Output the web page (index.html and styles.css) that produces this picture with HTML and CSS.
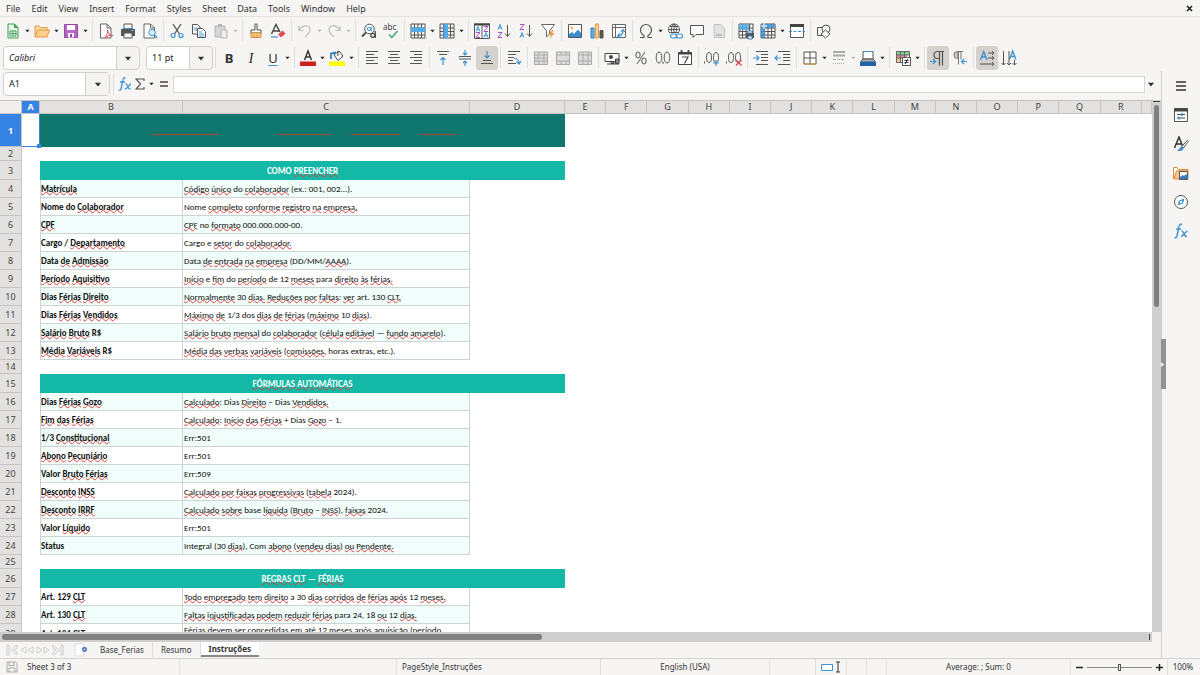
FILE: index.html
```html
<!DOCTYPE html>
<html lang="pt-BR">
<head>
<meta charset="utf-8">
<meta name="viewport" content="width=device-width, initial-scale=1">
<title>Instruções</title>
<link rel="stylesheet" href="styles.css">
</head>
<body>
<svg class="defs" aria-hidden="true">
  <defs>
    <path id="wave" d="M0 2l2-1 2 1 2-1 2 1 2-1 2 1 2-1 2 1 2-1 2 1 2-1 2 1 2-1 2 1 2-1 2 1 2-1 2 1 2-1 2 1 2-1 2 1 2-1 2 1 2-1 2 1 2-1 2 1 2-1 2 1 2-1 2 1 2-1 2 1 2-1 2 1" fill="none" stroke="#b5413a"/>
    <path id="ia" d="M0 5.500 2 .5 4 5.500M1 3.800h2" fill="none" stroke="#3e93d2"/>
    <path id="iz" d="M0 .5h4L0 5.500h4" fill="none" stroke="#a44fc0"/>
    <symbol id="tri" viewBox="0 0 6 4"><path d="M.5.5h5L3 3.5z" fill="currentColor"/></symbol>
    <symbol id="sheetgrid" viewBox="0 0 16 16"><path d="M1 1h14v14H1zM1 5h14M1 8.500h14M1 12h14M4.500 1v14M8 1v14M11.500 1v14" fill="none" stroke="#555"/></symbol>
  </defs>
</svg>

<nav class="menubar">
  <button>File</button><button>Edit</button><button>View</button><button>Insert</button><button>Format</button><button>Styles</button><button>Sheet</button><button>Data</button><button>Tools</button><button>Window</button><button>Help</button>
  <button class="close" aria-label="Close"><svg width="7" height="7" viewBox="0 0 7 7"><path d="M1 1l5 5M6 1L1 6" stroke="#222" stroke-width="1.6"/></svg></button>
</nav>

<div class="toolbar" role="toolbar" aria-label="Standard">
  <button class="tool" aria-label="New"><svg viewBox="0 0 16 16"><path d="M3 1h6.500L13 4.500V15H3z" fill="#e6f5e9" stroke="#3f9e54"/><path d="M9.500 1v3.500H13" fill="#3f9e54" stroke="#3f9e54"/><path d="M5 8h6v5H5zM5 10.500h6M8 8v5" fill="#fff" stroke="#3f9e54"/></svg></button>
  <button class="dd" aria-label="New options"><svg><use href="#tri"/></svg></button>
  <button class="tool" aria-label="Open"><svg viewBox="0 0 16 16"><path d="M1 14V3h4l1.500 1.500H13V7" fill="#fbd9a4" stroke="#dd9a45"/><path d="M1 14 3.500 7H15.500L13 14z" fill="#fcd08c" stroke="#e39a3c"/></svg></button>
  <button class="dd" aria-label="Open options"><svg><use href="#tri"/></svg></button>
  <button class="tool" aria-label="Save"><svg viewBox="0 0 16 16"><path d="M1.500 1.500h13v13h-13z" fill="#b967c7" stroke="#9b45ab"/><path d="M4 2h8v5H4zM5 10h6v4.500H5z" fill="#fff"/><path d="M7 11h2v3H7z" fill="#9b45ab"/></svg></button>
  <button class="dd" aria-label="Save options"><svg><use href="#tri"/></svg></button>
  <span class="sep"></span>
  <button class="tool" aria-label="Export as PDF"><svg viewBox="0 0 16 16"><path d="M2.500 1h6.500l4 4v10H2.500z" fill="#fff" stroke="#666"/><path d="M9 1v4h4" fill="none" stroke="#666"/><path d="M7 15c2-3 3-6 2.500-8 0 3 2 5 5.500 5.500-3-.5-6 .5-8 2.500" fill="none" stroke="#db4a54"/></svg></button>
  <button class="tool" aria-label="Print"><svg viewBox="0 0 16 16"><path d="M4 1h8v5H4z" fill="#fff" stroke="#555"/><path d="M1 6h14v7H1z" fill="#555"/><path d="M4 10h8v5H4z" fill="#f8f8f8" stroke="#555"/><path d="M11 7.500h3" stroke="#55a8e3"/><path d="M3 5.500h10" stroke="#3f91cf"/></svg></button>
  <button class="tool" aria-label="Print preview"><svg viewBox="0 0 16 16"><path d="M2 1h6.500l4 4v10H2z" fill="#fff" stroke="#666"/><path d="M8.500 1v4h4" fill="none" stroke="#666"/><circle cx="10" cy="9.500" r="3.300" fill="#d9efff" stroke="#3e93d2"/><path d="M12.500 12l2.500 3" stroke="#3e93d2" stroke-width="1.500"/></svg></button>
  <span class="sep"></span>
  <button class="tool" aria-label="Cut"><svg viewBox="0 0 16 16"><path d="M4 1l6.500 10M12 1L5.500 11" stroke="#555" stroke-width="1.300"/><circle cx="4" cy="12.500" r="2" fill="none" stroke="#3e93d2" stroke-width="1.200"/><circle cx="12" cy="12.500" r="2" fill="none" stroke="#3e93d2" stroke-width="1.200"/></svg></button>
  <button class="tool" aria-label="Copy"><svg viewBox="0 0 16 16"><path d="M1.500 1.500h5L9 4v7H1.500z" fill="#fff" stroke="#555"/><path d="M6.500 5.500h5l3 3v6h-8z" fill="#fff" stroke="#555"/><path d="M3 5h3M3 7h3M8 9h3M8 11h5M8 13h5" stroke="#4b9cd8"/></svg></button>
  <button class="tool" aria-label="Paste"><svg viewBox="0 0 16 16"><path d="M2 3h10v11H2z" fill="#d6d6d6" stroke="#b5b5b5"/><path d="M5 1h4v3H5z" fill="#b5b5b5"/><path d="M8 7h6v8H8z" fill="#eee" stroke="#b5b5b5"/></svg></button>
  <button class="dd off" aria-label="Paste options"><svg><use href="#tri"/></svg></button>
  <span class="sep"></span>
  <button class="tool" aria-label="Clone formatting"><svg viewBox="0 0 16 16"><path d="M7 1h2v6h4v3H3V7h4z" fill="#fff" stroke="#555"/><path d="M3 10h10v4.500H3z" fill="#f8c98b" stroke="#dd8e36"/><path d="M6 12v3M9 12v3" stroke="#dd8e36"/></svg></button>
  <button class="tool" aria-label="Clear formatting"><svg viewBox="0 0 16 16"><path d="M1.500 11 6 1.500 10 9M3.300 8H9" fill="none" stroke="#444" stroke-width="1.400"/><path d="M1 14h7" stroke="#3e93d2" stroke-width="1.200"/><path d="M8 11.500l4.500-4 3 3-4.500 4z" fill="#e34b54"/></svg></button>
  <span class="sep"></span>
  <button class="tool" aria-label="Undo"><svg viewBox="0 0 16 16"><path d="M2 3v4.500h4.500M2 7.500C5 2 12 1 13 6c.6 3-2 5-5 8" fill="none" stroke="#bdbdbd" stroke-width="1.200"/></svg></button>
  <button class="dd off" aria-label="Undo options"><svg><use href="#tri"/></svg></button>
  <button class="tool" aria-label="Redo"><svg viewBox="0 0 16 16"><path d="M14 3v4.500H9.500M14 7.500C11 2 4 1 3 6c-.6 3 2 5 5 8" fill="none" stroke="#bdbdbd" stroke-width="1.200"/></svg></button>
  <button class="dd off" aria-label="Redo options"><svg><use href="#tri"/></svg></button>
  <span class="sep"></span>
  <button class="tool" aria-label="Find and replace"><svg viewBox="0 0 16 16"><circle cx="8.500" cy="6" r="4.800" fill="#fff" stroke="#555"/><path d="M5 9.500 1 13.500" stroke="#444" stroke-width="1.800"/><circle cx="8" cy="6" r="1.700" fill="none" stroke="#3e93d2"/><path d="M10.200 3.500v5" stroke="#3e93d2"/><circle cx="11.800" cy="12.300" r="2" fill="#f6f5f4" stroke="#444" stroke-width="1.200"/><path d="M14.300 8v7" stroke="#444" stroke-width="1.200"/></svg></button>
  <button class="tool" aria-label="Spelling"><svg viewBox="0 0 16 16"><text x="0" y="7" font-size="8" fill="#444">abc</text><path d="M6 11.500l2.800 3L14.500 8" fill="none" stroke="#3fae6a" stroke-width="1.500"/></svg></button>
  <span class="sep"></span>
  <button class="tool" aria-label="Row"><svg viewBox="0 0 16 16"><use href="#sheetgrid"/><path d="M1 4.500h14V9H1z" fill="#54abe8"/></svg></button>
  <button class="dd" aria-label="Row options"><svg><use href="#tri"/></svg></button>
  <button class="tool" aria-label="Column"><svg viewBox="0 0 16 16"><use href="#sheetgrid"/><path d="M4.500 1H9v14H4.500z" fill="#54abe8"/></svg></button>
  <button class="dd" aria-label="Column options"><svg><use href="#tri"/></svg></button>
  <span class="sep"></span>
  <button class="tool" aria-label="Sort"><svg viewBox="0 0 16 16"><path d="M.5 1h15v14.500H.5zM8 1v14" fill="#fff" stroke="#555"/><path d="M0 1.500h16" stroke="#444" stroke-width="2"/><use href="#ia" x="2" y="3"/><use href="#iz" x="2" y="9"/><use href="#iz" x="10" y="3"/><use href="#ia" x="10" y="9"/></svg></button>
  <button class="tool" aria-label="Sort ascending"><svg viewBox="0 0 16 16"><use href="#ia" x="2" y="1"/><use href="#iz" x="2" y="9"/><path d="M11.500 2v11M9 10.500l2.500 3 2.500-3" fill="none" stroke="#555"/></svg></button>
  <button class="tool" aria-label="Sort descending"><svg viewBox="0 0 16 16"><use href="#iz" x="2" y="1"/><use href="#ia" x="2" y="9"/><path d="M11.500 2v11M9 10.500l2.500 3 2.500-3" fill="none" stroke="#555"/></svg></button>
  <button class="tool" aria-label="AutoFilter"><svg viewBox="0 0 16 16"><path d="M1.500 1.500h13L9.500 8v3L6.500 14V8z" fill="#fff" stroke="#666"/><path d="M12 7 8.500 12H11l-1.500 4 5-6H12l1.500-3z" fill="#f19b3d"/></svg></button>
  <span class="sep"></span>
  <button class="tool" aria-label="Insert image"><svg viewBox="0 0 16 16"><path d="M1.500 1.500h13v13h-13z" fill="#fff" stroke="#555"/><circle cx="5" cy="5" r="1.500" fill="#f5b45d"/><path d="M2 14v-3l3-2 2 2 4-4.500 3 3.500v4z" fill="#3b8dcc"/></svg></button>
  <button class="tool" aria-label="Insert chart"><svg viewBox="0 0 16 16"><path d="M2 5h3v10H2z" fill="#62b1e8" stroke="#2f7fc0"/><path d="M6.500 1h3v14h-3z" fill="#fbd193" stroke="#e39a3c"/><path d="M11 7.500h3V15h-3z" fill="#555" stroke="#555"/></svg></button>
  <button class="tool" aria-label="Pivot table"><svg viewBox="0 0 16 16"><path d="M1.500 1.500h13v13h-13zM1.500 4.500h13M4.500 1.500v13" fill="#fff" stroke="#666"/><path d="M7 13c4 0 5-2 5-6M10 9l2-2.500L14 9M9 10.500 6.500 13 9 15" fill="none" stroke="#3e93d2" stroke-width="1.200"/></svg></button>
  <span class="sep"></span>
  <button class="tool" aria-label="Special character"><svg viewBox="0 0 16 16"><path d="M2 14.500h4v-2C3.500 11 2.500 9.500 2.500 7a5.500 5.500 0 0 1 11 0c0 2.500-1 4-3.500 5.500v2h4" fill="none" stroke="#555" stroke-width="1.200"/></svg></button>
  <button class="dd" aria-label="Special character options"><svg><use href="#tri"/></svg></button>
  <button class="tool" aria-label="Hyperlink"><svg viewBox="0 0 16 16"><circle cx="7" cy="6.500" r="5.500" fill="#fff" stroke="#555"/><path d="M1.500 6.500h11M7 1v11M2.500 3.500h9M2.500 9.500h9" stroke="#555"/><ellipse cx="7" cy="6.500" rx="2.500" ry="5.500" fill="none" stroke="#555"/><path d="M3 10h12v6H3z" fill="#f6f5f4"/><rect x="3.500" y="11" width="6" height="4" rx="2" fill="none" stroke="#3e93d2" stroke-width="1.200"/><rect x="9.500" y="11" width="6" height="4" rx="2" fill="none" stroke="#3e93d2" stroke-width="1.200"/></svg></button>
  <button class="tool" aria-label="Comment"><svg viewBox="0 0 16 16"><path d="M1.500 2.500h13v9H7l-3 3v-3H1.500z" fill="#fff" stroke="#555"/></svg></button>
  <button class="tool" aria-label="Headers and footers"><svg viewBox="0 0 16 16"><path d="M3 1.500h6.500l4 4v9H3z" fill="#e2e2e2" stroke="#c2c2c2"/><path d="M5 11h6v2H5z" fill="#bbb"/></svg></button>
  <span class="sep"></span>
  <button class="tool" aria-label="Print area"><svg viewBox="0 0 16 16"><use href="#sheetgrid"/><path d="M1 1h10v6H1z" fill="#54abe8" opacity=".8"/><path d="M8 10h8v5H8z" fill="#555"/><path d="M9.500 8h5v2h-5zM10 13h4v3h-4z" fill="#fff" stroke="#3e79a8"/></svg></button>
  <button class="tool" aria-label="Freeze rows and columns"><svg viewBox="0 0 16 16"><use href="#sheetgrid"/><path d="M1 1h14v4H5v10H1z" fill="#3e93d2" opacity=".85"/><path d="M4 0v6M1 3h6" stroke="#fff"/></svg></button>
  <button class="dd" aria-label="Freeze options"><svg><use href="#tri"/></svg></button>
  <button class="tool" aria-label="Split window"><svg viewBox="0 0 16 16"><path d="M1.500 1.500h13v13h-13z" fill="#fff" stroke="#555"/><path d="M1 2.500h14" stroke="#444" stroke-width="3"/><path d="M0 8.500h16" stroke="#3e93d2" stroke-dasharray="3 1.500"/></svg></button>
  <span class="sep"></span>
  <button class="tool" aria-label="Draw functions"><svg viewBox="0 0 16 16"><path d="M1.500 4.500h7v8h-7z" fill="none" stroke="#555"/><circle cx="10" cy="6" r="4" fill="#f6f5f4" stroke="#555"/><path d="M9.500 7 14 11l-4.500 4L5 11z" fill="#f6f5f4" stroke="#555"/></svg></button>
</div>

<div class="toolbar" role="toolbar" aria-label="Formatting">
  <span class="combo font"><select aria-label="Font name"><option>Calibri</option></select><svg class="arrow"><use href="#tri"/></svg></span>
  <span class="combo size"><select aria-label="Font size"><option>11 pt</option></select><svg class="arrow"><use href="#tri"/></svg></span>
  <span class="sep"></span>
  <button class="tool letter bold">B</button>
  <button class="tool letter ital">I</button>
  <button class="tool letter under">U</button>
  <button class="dd" aria-label="Underline options"><svg><use href="#tri"/></svg></button>
  <span class="sep"></span>
  <button class="tool" aria-label="Font color"><svg viewBox="0 0 16 16"><path d="M4.500 10 8 1l3.500 9M5.800 7h4.500" fill="none" stroke="#333" stroke-width="1.400"/><path d="M0 11.500h16V16H0z" fill="#c9211e"/></svg></button>
  <button class="dd" aria-label="Font color options"><svg><use href="#tri"/></svg></button>
  <button class="tool" aria-label="Highlight color"><svg viewBox="0 0 16 16"><path d="M5 5l5-4 4 5-5 4.500z" fill="#fff" stroke="#444"/><path d="M2 9V3.500l5-1" fill="none" stroke="#2c83c6" stroke-width="1.800"/><path d="M9 1v5" stroke="#444"/><path d="M0 11.500h16V16H0z" fill="#ff0"/></svg></button>
  <button class="dd" aria-label="Highlight options"><svg><use href="#tri"/></svg></button>
  <span class="sep"></span>
  <button class="tool" aria-label="Align left"><svg viewBox="0 0 16 16"><path d="M2 1.500h12M2 4.500h8M2 7.500h12M2 10.500h8M2 13.500h12" stroke="#555"/></svg></button>
  <button class="tool" aria-label="Center horizontally"><svg viewBox="0 0 16 16"><path d="M2 1.500h12M4 4.500h8M2 7.500h12M4 10.500h8M2 13.500h12" stroke="#555"/></svg></button>
  <button class="tool" aria-label="Align right"><svg viewBox="0 0 16 16"><path d="M2 1.500h12M6 4.500h8M2 7.500h12M6 10.500h8M2 13.500h12" stroke="#555"/></svg></button>
  <span class="sep"></span>
  <button class="tool" aria-label="Align top"><svg viewBox="0 0 16 16"><path d="M2 1.500h12M4 4.500h8" stroke="#555"/><path d="M8 15V8M5.500 10 8 7.500l2.500 2.500" fill="none" stroke="#3e93d2" stroke-width="1.200"/></svg></button>
  <button class="tool" aria-label="Center vertically"><svg viewBox="0 0 16 16"><path d="M2 6.500h12M2 9h12" stroke="#555"/><path d="M8 0v5M6 3l2 2 2-2M8 16v-5M6 13l2-2 2 2" fill="none" stroke="#3e93d2" stroke-width="1.200"/></svg></button>
  <button class="tool on" aria-label="Align bottom"><svg viewBox="0 0 16 16"><path d="M4 10.500h8M2 13.500h12" stroke="#555"/><path d="M8 1v7M5.500 5.500 8 8l2.500-2.500" fill="none" stroke="#3e93d2" stroke-width="1.200"/></svg></button>
  <span class="sep"></span>
  <button class="tool" aria-label="Wrap text"><svg viewBox="0 0 16 16"><path d="M2 1.500h12M2 4.500h8M2 7.500h6M2 10.500h5M2 13.500h8" stroke="#555"/><path d="M8 8.500c4 0 5 1.500 5 5M10.500 11.500l2.500 2.500 2-3" fill="none" stroke="#3e93d2" stroke-width="1.200"/></svg></button>
  <span class="sep"></span>
  <button class="tool" aria-label="Merge and center"><svg viewBox="0 0 16 16"><path d="M1.500 2h13v12.500h-13zM1.500 5h13M1.500 8h13M1.500 11h13M6 2v3M11 2v3M5 5v6M11 5v6M6 11v3.500M11 11v3.500" fill="#ddd" stroke="#aaa"/></svg></button>
  <button class="tool" aria-label="Merge cells"><svg viewBox="0 0 16 16"><path d="M1.500 2h13v12.500h-13zM1.500 5h13M1.500 11h13M6 2v3M11 2v3M6 11v3.500M11 11v3.500" fill="#ddd" stroke="#aaa"/></svg></button>
  <button class="tool" aria-label="Unmerge cells"><svg viewBox="0 0 16 16"><path d="M1.500 2h13v12.500h-13zM1.500 5h13M1.500 11h13M6 2v12.500M11 2v12.500" fill="#ddd" stroke="#aaa"/></svg></button>
  <span class="sep"></span>
  <button class="tool" aria-label="Format as currency"><svg viewBox="0 0 16 16"><path d="M1 3.500h14v8H1z" fill="#fff" stroke="#444"/><circle cx="7" cy="7" r="2" fill="#444"/><path d="M7 13.500v-2h3v2zM11.500 13.500V9H15v4.500zM3 14h12" fill="#888" stroke="#444"/></svg></button>
  <button class="dd" aria-label="Currency options"><svg><use href="#tri"/></svg></button>
  <button class="tool" aria-label="Format as percent"><svg viewBox="0 0 16 16"><ellipse cx="5" cy="5" rx="2.200" ry="3" fill="none" stroke="#555"/><ellipse cx="11" cy="11" rx="2.200" ry="3" fill="none" stroke="#555"/><path d="M12 2 4 14" stroke="#555"/></svg></button>
  <button class="tool" aria-label="Format as number"><svg viewBox="0 0 16 16"><ellipse cx="4" cy="7.500" rx="2.800" ry="5.500" fill="none" stroke="#555"/><ellipse cx="12" cy="7.500" rx="2.800" ry="5.500" fill="none" stroke="#555"/><path d="M8 11.500v2.500" stroke="#555"/></svg></button>
  <button class="tool" aria-label="Format as date"><svg viewBox="0 0 16 16"><path d="M1.500 2.500h13v12h-13z" fill="#fff" stroke="#444"/><path d="M1 3.500h14M4.500 0v3M11.500 0v3" stroke="#444" stroke-width="1.800"/><path d="M5 7h6l-3.500 6.500" fill="none" stroke="#444" stroke-width="1.200"/></svg></button>
  <span class="sep"></span>
  <button class="tool" aria-label="Add decimal place"><svg viewBox="0 0 16 16"><ellipse cx="5" cy="7.500" rx="2.500" ry="5" fill="none" stroke="#555"/><ellipse cx="12" cy="7.500" rx="2.500" ry="5" fill="none" stroke="#555"/><path d="M.5 11.500v2" stroke="#555"/><path d="M12 10v6M9 13h6" stroke="#3e93d2" stroke-width="1.200"/></svg></button>
  <button class="tool" aria-label="Delete decimal place"><svg viewBox="0 0 16 16"><ellipse cx="5" cy="7.500" rx="2.500" ry="5" fill="none" stroke="#555"/><ellipse cx="12" cy="7.500" rx="2.500" ry="5" fill="none" stroke="#555"/><path d="M.5 11.500v2" stroke="#555"/><path d="M10 10l5.500 5.500M15.500 10 10 15.500" stroke="#df4750" stroke-width="1.200"/></svg></button>
  <span class="sep"></span>
  <button class="tool" aria-label="Increase indent"><svg viewBox="0 0 16 16"><path d="M3 1.500h12M8 4.500h7M8 7.500h7M8 10.500h7M3 14.500h12" stroke="#555"/><path d="M0 8h6M3.500 5.500 6 8l-2.500 2.500" fill="none" stroke="#3e93d2" stroke-width="1.200"/></svg></button>
  <button class="tool" aria-label="Decrease indent"><svg viewBox="0 0 16 16"><path d="M3 1.500h12M8 4.500h7M8 7.500h7M8 10.500h7M3 14.500h12" stroke="#555"/><path d="M0 8h6M2.500 5.500 0 8l2.500 2.500" fill="none" stroke="#3e93d2" stroke-width="1.200"/></svg></button>
  <span class="sep"></span>
  <button class="tool" aria-label="Borders"><svg viewBox="0 0 16 16"><path d="M2 2h12v12H2zM2 8h12M8 2v12" fill="#fff" stroke="#555"/><path d="M2 14h12" stroke="#e39a3c"/></svg></button>
  <button class="dd" aria-label="Border options"><svg><use href="#tri"/></svg></button>
  <button class="tool" aria-label="Border style"><svg viewBox="0 0 16 16"><path d="M2 2h12M2 5.500h12" stroke="#aaa" stroke-width="2"/><path d="M2 9.500h12" stroke="#aaa" stroke-dasharray="3 1"/><path d="M2 13.500h12" stroke="#aaa" stroke-dasharray="1 1"/></svg></button>
  <button class="dd off" aria-label="Border style options"><svg><use href="#tri"/></svg></button>
  <button class="tool" aria-label="Border color"><svg viewBox="0 0 16 16"><path d="M3 1.500h10V9H3zM1 11l2-2h10l2 2z" fill="#fff" stroke="#555"/><path d="M3.500 1.500h9" stroke="#3e93d2"/><path d="M0 11.500h16V16H0z" fill="#2362a5"/></svg></button>
  <button class="dd" aria-label="Border color options"><svg><use href="#tri"/></svg></button>
  <span class="sep"></span>
  <button class="tool" aria-label="Conditional formatting"><svg viewBox="0 0 16 16"><path d="M1.500 1.500h13v11h-13z" fill="#fff" stroke="#666"/><path d="M2 2h12v3H2z" fill="#80d09b"/><path d="M2 5h10v3H2z" fill="#ef8a8a"/><path d="M2 8h4v4H2z" fill="#f9c985"/><path d="M1.500 5h13M1.500 8h13M5.500 1.500v11M9.500 1.500v11" stroke="#666"/><path d="M7.500 7.500h8v8h-8z" fill="#fff" stroke="#555"/><path d="M9.500 10.500h4M9.500 12.500h4M13 9l-3 5" stroke="#333"/></svg></button>
  <button class="dd" aria-label="Conditional options"><svg><use href="#tri"/></svg></button>
  <span class="sep"></span>
  <button class="tool on" aria-label="Left-to-right"><svg viewBox="0 0 16 16"><path d="M14 1.500H7.500a3.500 3.500 0 0 0 0 7H9M9.500 1.500v14M12.500 1.500v14" fill="none" stroke="#555" stroke-width="1.200"/><path d="M0 11.500h5.500M3 9l2.500 2.500L3 14" fill="none" stroke="#3e93d2" stroke-width="1.200"/></svg></button>
  <button class="tool" aria-label="Right-to-left"><svg viewBox="0 0 16 16"><path d="M11 1.500H5.500a3.500 3.500 0 0 0 0 7H6V1.500M6.500 1.500v13M9 1.500v8" fill="#ccc" stroke="#777"/><path d="M9.500 11.500H15M12 9l-2.500 2.500L12 14" fill="none" stroke="#3e93d2" stroke-width="1.200"/></svg></button>
  <span class="sep"></span>
  <button class="tool on" aria-label="Text direction from left to right"><svg viewBox="0 0 16 16"><path d="M1.500 10 4.700 1.500 8 10M2.800 7h4" fill="none" stroke="#3e93d2" stroke-width="1.400"/><path d="M9 3h6M13 1l2 2-2 2M9 8h6M13 6l2 2-2 2M1 14h14M13 12l2 2-2 2" fill="none" stroke="#555"/></svg></button>
  <button class="tool" aria-label="Text direction from top to bottom"><svg viewBox="0 0 16 16"><path d="M8.500 9.500 11.700 1l3.200 8.500M9.800 6.500h4" fill="none" stroke="#3e93d2" stroke-width="1.400"/><path d="M2.500 1v14M.5 13l2 2 2-2M8 1v14M6 13l2 2 2-2M13.500 10v5M11.500 13l2 2 2-2" fill="none" stroke="#555"/></svg></button>
</div>

<div class="workspace">
  <main class="content">
    <div class="formulabar">
      <span class="namebox"><input type="text" value="A1" aria-label="Name box"><button aria-label="Cell names"><svg><use href="#tri"/></svg></button></span>
      <span class="sep"></span>
      <button class="fx" aria-label="Function wizard"><svg width="14" height="16" viewBox="0 0 14 16"><path d="M7.500 2C5.500 1 5 3 4.500 6L3.200 12C2.800 14 2 14.500.8 14M2 6h5M7.500 8c2-1 2 6 5 5M13 8c-2 0-3.500 5-6 5.200" fill="none" stroke="#3e93d2" stroke-width="1.300"/></svg></button>
      <button class="sigma" aria-label="Select function"><svg width="10" height="12" viewBox="0 0 10 12"><path d="M9 3V1H1l4.500 5L1 11h8V9" fill="none" stroke="#555" stroke-width="1.200"/></svg></button>
      <button class="dd" aria-label="Function options"><svg><use href="#tri"/></svg></button>
      <button class="equals" aria-label="Formula"><svg width="8" height="6" viewBox="0 0 8 6"><path d="M0 1h8M0 5h8" stroke="#444" stroke-width="1.500"/></svg></button>
      <input class="formula" type="text" aria-label="Input line">
      <button class="expand" aria-label="Expand formula bar"><svg><use href="#tri"/></svg></button>
    </div>

    <div class="sheetrow">
      <div class="sheet">
        <table class="grid">
          <colgroup><col class="c-head"><col class="c-a"><col class="c-b"><col class="c-c"><col class="c-d"><col span="14"><col class="c-s"></colgroup>
          <thead>
            <tr><th></th><th class="sel">A</th><th>B</th><th>C</th><th>D</th><th>E</th><th>F</th><th>G</th><th>H</th><th>I</th><th>J</th><th>K</th><th>L</th><th>M</th><th>N</th><th>O</th><th>P</th><th>Q</th><th>R</th><th></th></tr>
          </thead>
          <tbody>
            <tr class="r-title"><th class="sel">1</th><td class="cursor"></td><td class="title" colspan="3"><div class="waves"><svg width="67" height="3"><use href="#wave"/></svg><svg width="54" height="3"><use href="#wave"/></svg><svg width="49" height="3"><use href="#wave"/></svg><svg width="36" height="3"><use href="#wave"/></svg></div></td></tr>
            <tr class="r-gap"><th>2</th></tr>
            <tr class="r-section"><th>3</th><td></td><td class="section" colspan="3">COMO <u>PREENCHER</u></td></tr>
            <tr class="tint"><th>4</th><td></td><td class="k"><u>Matrícula</u></td><td class="v"><u>Código</u> <u>único</u> do <u>colaborador</u> (ex.: 001, 002...).</td></tr>
            <tr><th>5</th><td></td><td class="k">Nome do <u>Colaborador</u></td><td class="v">Nome <u>completo</u> <u>conforme</u> <u>registro</u> <u>na</u> <u>empresa.</u></td></tr>
            <tr class="tint"><th>6</th><td></td><td class="k"><u>CPF</u></td><td class="v"><u>CPF</u> no <u>formato</u> 000.000.000-00.</td></tr>
            <tr><th>7</th><td></td><td class="k">Cargo / <u>Departamento</u></td><td class="v">Cargo e <u>setor</u> do <u>colaborador.</u></td></tr>
            <tr class="tint"><th>8</th><td></td><td class="k">Data <u>de</u> <u>Admissão</u></td><td class="v">Data <u>de</u> <u>entrada</u> <u>na</u> <u>empresa</u> (DD/MM/<u>AAAA</u>).</td></tr>
            <tr><th>9</th><td></td><td class="k"><u>Período</u> <u>Aquisitivo</u></td><td class="v"><u>Início</u> e <u>fim</u> do <u>período</u> de 12 <u>meses</u> para <u>direito</u> <u>às</u> <u>férias.</u></td></tr>
            <tr class="tint"><th>10</th><td></td><td class="k">Dias <u>Férias</u> <u>Direito</u></td><td class="v"><u>Normalmente</u> 30 <u>dias.</u> <u>Reduções</u> <u>por</u> <u>faltas</u>: <u>ver</u> art. 130 <u>CLT.</u></td></tr>
            <tr><th>11</th><td></td><td class="k">Dias <u>Férias</u> <u>Vendidos</u></td><td class="v"><u>Máximo</u> <u>de</u> 1/3 dos <u>dias</u> <u>de</u> <u>férias</u> (<u>máximo</u> 10 <u>dias</u>).</td></tr>
            <tr class="tint"><th>12</th><td></td><td class="k"><u>Salário</u> <u>Bruto</u> R$</td><td class="v"><u>Salário</u> <u>bruto</u> <u>mensal</u> do <u>colaborador</u> (<u>célula</u> <u>editável</u> — <u>fundo</u> <u>amarelo</u>).</td></tr>
            <tr><th>13</th><td></td><td class="k"><u>Média</u> <u>Variáveis</u> R$</td><td class="v"><u>Média</u> <u>das</u> <u>verbas</u> <u>variáveis</u> (<u>comissões</u>, horas extras, etc.).</td></tr>
            <tr class="r-gap"><th>14</th></tr>
            <tr class="r-section"><th>15</th><td></td><td class="section" colspan="3"><u>FÓRMULAS</u> <u>AUTOMÁTICAS</u></td></tr>
            <tr class="tint"><th>16</th><td></td><td class="k">Dias <u>Férias</u> <u>Gozo</u></td><td class="v"><u>Calculado</u>: Dias <u>Direito</u> – Dias <u>Vendidos.</u></td></tr>
            <tr><th>17</th><td></td><td class="k"><u>Fim</u> <u>das</u> <u>Férias</u></td><td class="v"><u>Calculado</u>: <u>Início</u> <u>das</u> <u>Férias</u> + Dias <u>Gozo</u> – 1.</td></tr>
            <tr class="tint"><th>18</th><td></td><td class="k">1/3 <u>Constitucional</u></td><td class="v">Err:501</td></tr>
            <tr><th>19</th><td></td><td class="k"><u>Abono</u> <u>Pecuniário</u></td><td class="v">Err:501</td></tr>
            <tr class="tint"><th>20</th><td></td><td class="k">Valor <u>Bruto</u> <u>Férias</u></td><td class="v">Err:509</td></tr>
            <tr><th>21</th><td></td><td class="k"><u>Desconto</u> <u>INSS</u></td><td class="v"><u>Calculado</u> <u>por</u> <u>faixas</u> <u>progressivas</u> (<u>tabela</u> 2024).</td></tr>
            <tr class="tint"><th>22</th><td></td><td class="k"><u>Desconto</u> <u>IRRF</u></td><td class="v"><u>Calculado</u> <u>sobre</u> base <u>líquida</u> (<u>Bruto</u> – <u>INSS</u>), <u>faixas</u> 2024.</td></tr>
            <tr><th>23</th><td></td><td class="k">Valor <u>Líquido</u></td><td class="v">Err:501</td></tr>
            <tr class="tint"><th>24</th><td></td><td class="k">Status</td><td class="v">Integral (30 <u>dias</u>), Com <u>abono</u> (<u>vendeu</u> <u>dias</u>) <u>ou</u> <u>Pendente.</u></td></tr>
            <tr class="r-gap"><th>25</th></tr>
            <tr class="r-section"><th>26</th><td></td><td class="section" colspan="3"><u>REGRAS</u> <u>CLT</u> — <u>FÉRIAS</u></td></tr>
            <tr><th>27</th><td></td><td class="k">Art. 129 <u>CLT</u></td><td class="v"><u>Todo</u> <u>empregado</u> <u>tem</u> <u>direito</u> a 30 <u>dias</u> <u>corridos</u> <u>de</u> <u>férias</u> <u>após</u> 12 <u>meses.</u></td></tr>
            <tr class="tint"><th>28</th><td></td><td class="k">Art. 130 <u>CLT</u></td><td class="v"><u>Faltas</u> <u>injustificadas</u> <u>podem</u> <u>reduzir</u> <u>férias</u> para 24, 18 <u>ou</u> 12 <u>dias.</u></td></tr>
            <tr class="r-last"><th>29</th><td></td><td class="k">Art. 134 <u>CLT</u></td><td class="v"><u>Férias</u> <u>devem</u> ser <u>concedidas</u> <u>em</u> <u>até</u> 12 <u>meses</u> <u>após</u> <u>aquisição</u> (<u>período</u></td></tr>
          </tbody>
        </table>
      </div>
      <div class="vscroll"><span class="notch"></span><span class="thumb"></span></div>
    </div>
    <div class="hscroll"><span class="thumb"></span><span class="notch"></span></div>

    <div class="tabs">
      <span class="nav">
        <button aria-label="First sheet"><svg width="13" height="12" viewBox="0 0 13 12"><path d="M1 1h2v10H1zM11 1 5 6l6 5V8L8 6l3-2z" fill="#fff" stroke="#c9c9c9"/></svg></button>
        <button aria-label="Previous sheet"><svg width="16" height="12" viewBox="0 0 16 12"><path d="M7 3 2 6l5 3zM14 3 9 6l5 3z" fill="#fff" stroke="#c9c9c9"/></svg></button>
        <button aria-label="Next sheet"><svg width="16" height="12" viewBox="0 0 16 12"><path d="M2 3l5 3-5 3zM9 3l5 3-5 3z" fill="#fff" stroke="#c9c9c9"/></svg></button>
        <button aria-label="Last sheet"><svg width="13" height="12" viewBox="0 0 13 12"><path d="M10 1h2v10h-2zM2 1l6 5-6 5V8l3-2-3-2z" fill="#fff" stroke="#c9c9c9"/></svg></button>
      </span>
      <button class="add" aria-label="Add sheet"><svg width="14" height="14" viewBox="0 0 14 14"><path d="M1 1h9v12H1z" fill="#fff" stroke="#ddd"/><circle cx="10.500" cy="6.500" r="1.700" fill="#fff" stroke="#2e63b8" stroke-width="1.500"/></svg></button>
      <button class="tab">Base_Ferias</button><button class="tab">Resumo</button><button class="tab active">Instruções</button>
    </div>
  </main>

  <aside class="sidebar">
    <button class="grip" aria-label="Hide sidebar"><svg width="4" height="6" viewBox="0 0 4 6"><path d="M0 0l4 3-4 3z" fill="#fff"/></svg></button>
    <button aria-label="Sidebar settings"><svg viewBox="0 0 16 16"><path d="M3 4h10M3 8h10M3 12h10" stroke="#333" stroke-width="1.500"/></svg></button>
    <button aria-label="Properties"><svg viewBox="0 0 16 16"><path d="M1.500 1.500h13v13h-13z" fill="#fff" stroke="#555"/><path d="M1 3h14" stroke="#444" stroke-width="3"/><path d="M4 7.500h8M4 11h8" stroke="#444"/><path d="M9 6v3M6 9.500v3" stroke="#3e93d2" stroke-width="1.500"/></svg></button>
    <button aria-label="Styles"><svg viewBox="0 0 16 16"><path d="M1.500 12 6 1l3.500 9M3 8h6" fill="none" stroke="#333" stroke-width="1.500"/><path d="M8.500 11 14 4.500c1.500 0 1.500 1 .500 2L10.500 12z" fill="#fff" stroke="#555"/><path d="M4 14.500c3 1.500 6 0 6.500-2L8.500 11C6.500 11 6.500 13.500 4 14.500z" fill="#3e93d2"/></svg></button>
    <button aria-label="Gallery"><svg viewBox="0 0 16 16"><path d="M.5 14V2.500H4l1.500 2H15V6H4z" fill="#fff" stroke="#e08d3a"/><path d="M1 14 3.500 6H15v8z" fill="#fbc983" stroke="#e08d3a"/><path d="M6.500 6.500h8v8h-8z" fill="#fff" stroke="#555"/><path d="M7 14v-2l2.500-2 1.500 1 2-2 1.500 2v3z" fill="#3480c4"/></svg></button>
    <button aria-label="Navigator"><svg viewBox="0 0 16 16"><circle cx="8" cy="8" r="6.500" fill="#fff" stroke="#555"/><path d="M11.500 4.500 10 9.500l-5.500 2L6 6.500z" fill="#3e93d2"/><circle cx="8" cy="8" r="1.200" fill="#fff"/></svg></button>
    <button aria-label="Functions"><svg viewBox="0 0 16 16"><path d="M9 1.500C6.500.5 6 3 5.500 6L4.200 12C3.800 14.500 3 15 1.500 14.500M3 6h5M8.500 8c2-1 2 6 5.500 5.500M14.500 8c-2 0-3.500 5-6.500 5.500" fill="none" stroke="#3e93d2" stroke-width="1.500"/></svg></button>
  </aside>
</div>

<footer class="status">
  <span class="s-doc"><svg width="12" height="12" viewBox="0 0 12 12"><path d="M1 1h8.500L11 2.500V11H1zM3 1v3.500h5V1M3 11V7h6v4" fill="none" stroke="#aaa"/></svg>Sheet 3 of 3</span>
  <span class="s-sel"></span>
  <span class="s-page">PageStyle_Instruções</span>
  <span class="s-lang">English (USA)</span>
  <span class="s-ins"></span>
  <span class="s-mode"><svg width="20" height="12" viewBox="0 0 20 12"><path d="M.5 3.500h11v6H.5z" fill="#fff" stroke="#3e93d2"/><path d="M15 1h4M15 11h4M17 1v10" stroke="#333"/></svg></span>
  <span class="s-sig"></span>
  <span class="s-sig"></span>
  <span class="s-sum">Average: ; Sum: 0</span>
  <span class="s-zoom"><button aria-label="Zoom out"><svg width="7" height="7" viewBox="0 0 7 7"><path d="M0 3.500h7" stroke="#222" stroke-width="1.500"/></svg></button><input type="range" min="0" max="100" value="50" aria-label="Zoom"><button aria-label="Zoom in"><svg width="7" height="7" viewBox="0 0 7 7"><path d="M0 3.500h7M3.500 0v7" stroke="#222" stroke-width="1.500"/></svg></button></span>
  <span class="s-pct">100%</span>
</footer>
</body>
</html>
```

FILE: styles.css
```css
* { box-sizing: border-box; }

body {
  margin: 0;
  height: 100vh;
  display: flex;
  flex-direction: column;
  overflow: hidden;
  background: #f6f5f4;
  color: #333;
  font: 9px/12px "Noto Sans", "Open Sans", sans-serif;
}

button, input, select {
  margin: 0;
  padding: 0;
  border: 0;
  background: none;
  color: inherit;
  font: inherit;
}

.defs { position: absolute; width: 0; height: 0; }

/* Menu bar */
.menubar {
  flex: none;
  display: flex;
  align-items: center;
  gap: 11px;
  height: 17px;
  padding: 1px 7px 0 6px;
  border-bottom: 1px solid #e6e4e2;
}
.close { margin-left: auto; display: flex; }

/* Toolbars */
.toolbar {
  flex: none;
  display: flex;
  align-items: center;
  height: 27px;
  padding-left: 2px;
}
.tool {
  flex: none;
  display: flex;
  align-items: center;
  justify-content: center;
  width: 22px;
  height: 24px;
  border-radius: 3px;
}
.tool svg { width: 16px; height: 16px; overflow: visible; }
.tool.on { background: #d5d1cd; }
.dd {
  flex: none;
  display: flex;
  align-items: center;
  justify-content: center;
  width: 7px;
  height: 24px;
  color: #222;
}
.dd svg { width: 5px; height: 4px; }
.dd.off { color: #bbb; }
.sep {
  flex: none;
  width: 5px;
  height: 21px;
  background: linear-gradient(#dfddda, #dfddda) center / 1px 100% no-repeat;
}
.dd + .sep { width: 6px; }
.letter { font-size: 13px; line-height: 16px; color: #333; }
.bold { font-weight: 700; }
.ital { font-family: "Liberation Serif", serif; font-style: italic; font-size: 15px; }
.under { text-decoration: underline; text-decoration-color: #3e93d2; text-underline-offset: 2px; }

.combo {
  flex: none;
  display: flex;
  align-items: center;
  position: relative;
  height: 24px;
  margin-left: 1px;
  border: 1px solid #d2cfcc;
  border-radius: 4px;
  background: linear-gradient(#d2cfcc, #d2cfcc) right 22px top / 1px 100% no-repeat,
              linear-gradient(90deg, #fff calc(100% - 22px), #f4f3f2 0);
}
.combo select { appearance: none; width: 100%; height: 100%; padding-left: 5px; color: #222; }
.combo .arrow {
  position: absolute;
  right: 7px;
  top: 9px;
  width: 8px;
  height: 5px;
  color: #333;
  pointer-events: none;
}
.font { width: 137px; }
.font select { font-style: italic; }
.size { width: 67px; margin-left: 6px; }

/* Work area */
.workspace { flex: 1; min-height: 0; display: flex; }
.content { flex: 1; min-width: 0; display: flex; flex-direction: column; }

.formulabar {
  flex: none;
  display: flex;
  align-items: center;
  height: 29px;
  padding: 0 4px 3px 3px;
}
.namebox {
  flex: none;
  display: flex;
  width: 107px;
  height: 24px;
  border: 1px solid #d2cfcc;
  border-radius: 4px;
  background: #fff;
  overflow: hidden;
}
.namebox input { flex: 1; min-width: 0; padding-left: 5px; color: #222; }
.namebox button {
  display: flex;
  align-items: center;
  justify-content: center;
  width: 24px;
  border-left: 1px solid #d2cfcc;
  background: #f4f3f2;
}
.namebox svg, .expand svg { width: 8px; height: 5px; color: #333; }
.formulabar > .sep { margin: 0 2px 0 1px; }
.fx, .sigma, .equals, .expand { flex: none; display: flex; align-items: center; justify-content: center; }
.fx { width: 14px; }
.sigma { width: 16px; }
.equals { width: 18px; }
.formula {
  flex: 1;
  min-width: 0;
  height: 17px;
  border: 1px solid #d9d7d5;
  background: #fff;
}
.expand { width: 12px; }

.sheetrow { flex: 1; min-height: 0; display: flex; }
.sheet { flex: 1; min-width: 0; overflow: hidden; background: #fff; }

/* Cell grid */
.grid {
  width: 100%;
  table-layout: fixed;
  border-collapse: separate;
  border-spacing: 0;
}
.c-head { width: 22px; }
.c-a { width: 18px; }
.c-b { width: 143px; }
.c-c { width: 287px; }
.c-d { width: 95px; }
.c-s { width: 10px; }
.grid th {
  padding: 1px 0 0;
  background: #e2e1df;
  border-right: 1px solid #c6c4c2;
  border-bottom: 1px solid #c6c4c2;
  color: #444;
  font-weight: 400;
  line-height: 12px;
}
.grid thead th { height: 14px; padding: 0; border-top: 1px solid #c6c4c2; }
.grid thead th:first-child { background: #f0efee; }
.grid .sel { background: #3584e4; color: #fff; font-weight: 700; }
.grid tbody tr { height: 18px; }
.grid tbody .r-title { height: 33px; }
.grid tbody .r-gap { height: 14px; }
.grid tbody .r-section { height: 19px; }
.grid tbody .r-last { height: 24px; }
.grid td {
  padding: 0 1px;
  font: 9px/11px Carlito, Lato, sans-serif;
  color: #111;
  white-space: nowrap;
}
.cursor { position: relative; border-bottom: 1px solid #3584e4; border-right: 1px solid #3584e4; }
.cursor::after {
  content: "";
  position: absolute;
  right: -2px;
  bottom: -2px;
  width: 4px;
  height: 4px;
  background: #3584e4;
}
.grid .title { background: #0f766e; }
.waves { display: flex; padding: 8px 0 0 110px; }
.waves svg { flex: none; margin-right: 20px; }
.waves svg:first-child { margin-right: 59px; }
.grid .section {
  background: #14b8a6;
  color: #fff;
  font-weight: 700;
  text-align: center;
}
.grid .k, .grid .v { border-right: 1px solid #ccd5d4; border-bottom: 1px solid #ccd5d4; }
.grid .k { border-left: 1px solid #ccd5d4; font-weight: 700; padding-left: 0; }
.tint .k, .tint .v { background: #f0fdfa; }
.r-last th, .r-last td { vertical-align: top; }
.grid .r-last th, .grid .r-last .k { padding-top: 4px; }
u {
  text-decoration: underline wavy #d8413c 1px;
  text-underline-offset: -1px;
  text-decoration-skip-ink: none;
}

/* Scroll bars */
.vscroll {
  flex: none;
  display: flex;
  flex-direction: column;
  align-items: center;
  width: 9px;
  background: #cecece;
}
.vscroll .notch { width: 7px; height: 1px; margin: 1px 0 3px; background: #444; }
.vscroll .thumb { width: 5px; height: 38%; border-radius: 3px; background: #808080; }
.hscroll {
  flex: none;
  display: flex;
  align-items: center;
  justify-content: space-between;
  height: 10px;
  margin-right: 9px;
  padding: 0 2px;
  background: #cecece;
}
.hscroll .thumb { width: 47%; height: 6px; border-radius: 3px; background: #808080; }
.hscroll .notch { width: 1px; height: 6px; background: #444; }

/* Sheet tabs */
.tabs { flex: none; display: flex; height: 16px; padding-left: 6px; font-size: 8px; }
.nav { display: flex; align-items: center; width: 68px; }
.nav button, .add { display: flex; align-items: center; }
.add { width: 18px; }
.tab { padding: 0 8px; height: 15px; border-right: 1px solid #ddd; }
.tab.active { border-right: 0; border-bottom: 2px solid #888; background: #fff; font-weight: 700; }

/* Side deck */
.sidebar {
  flex: none;
  position: relative;
  display: flex;
  flex-direction: column;
  align-items: center;
  gap: 13px;
  width: 39px;
  padding-top: 7px;
  border-left: 1px solid #cfcdcb;
}
.sidebar button { display: flex; }
.sidebar svg { width: 16px; height: 16px; }
.sidebar .grip {
  position: absolute;
  left: -1px;
  top: 268px;
  width: 5px;
  height: 50px;
  align-items: center;
  background: #929292;
}
.sidebar .grip svg { width: 3px; height: 5px; }

/* Status bar */
.status {
  flex: none;
  display: flex;
  height: 17px;
  border-top: 1px solid #d5d3d1;
  font-size: 8px;
}
.status > span {
  flex: none;
  display: flex;
  align-items: center;
  justify-content: center;
  border-right: 1px solid #e2e0de;
}
.status .s-doc { width: 180px; justify-content: flex-start; gap: 9px; padding-left: 6px; }
.status .s-sel { flex: 1 1 0; }
.status .s-page { width: 204px; justify-content: flex-start; padding-left: 5px; }
.status .s-lang { width: 169px; }
.status .s-ins { width: 46px; }
.status .s-mode { width: 31px; }
.status .s-sig { width: 20px; }
.status .s-sum { width: 184px; }
.status .s-zoom { width: 97px; gap: 4px; }
.status .s-zoom button { display: flex; }
.status .s-pct { width: 32px; padding-right: 2px; border-right: 0; }
input[type="range"] { appearance: none; width: 65px; height: 8px; }
input[type="range"]::-webkit-slider-runnable-track { height: 1px; background: #888; }
input[type="range"]::-webkit-slider-thumb {
  appearance: none;
  width: 3px;
  height: 7px;
  margin-top: -3px;
  border: 1px solid #555;
  background: #f6f5f4;
}
```
